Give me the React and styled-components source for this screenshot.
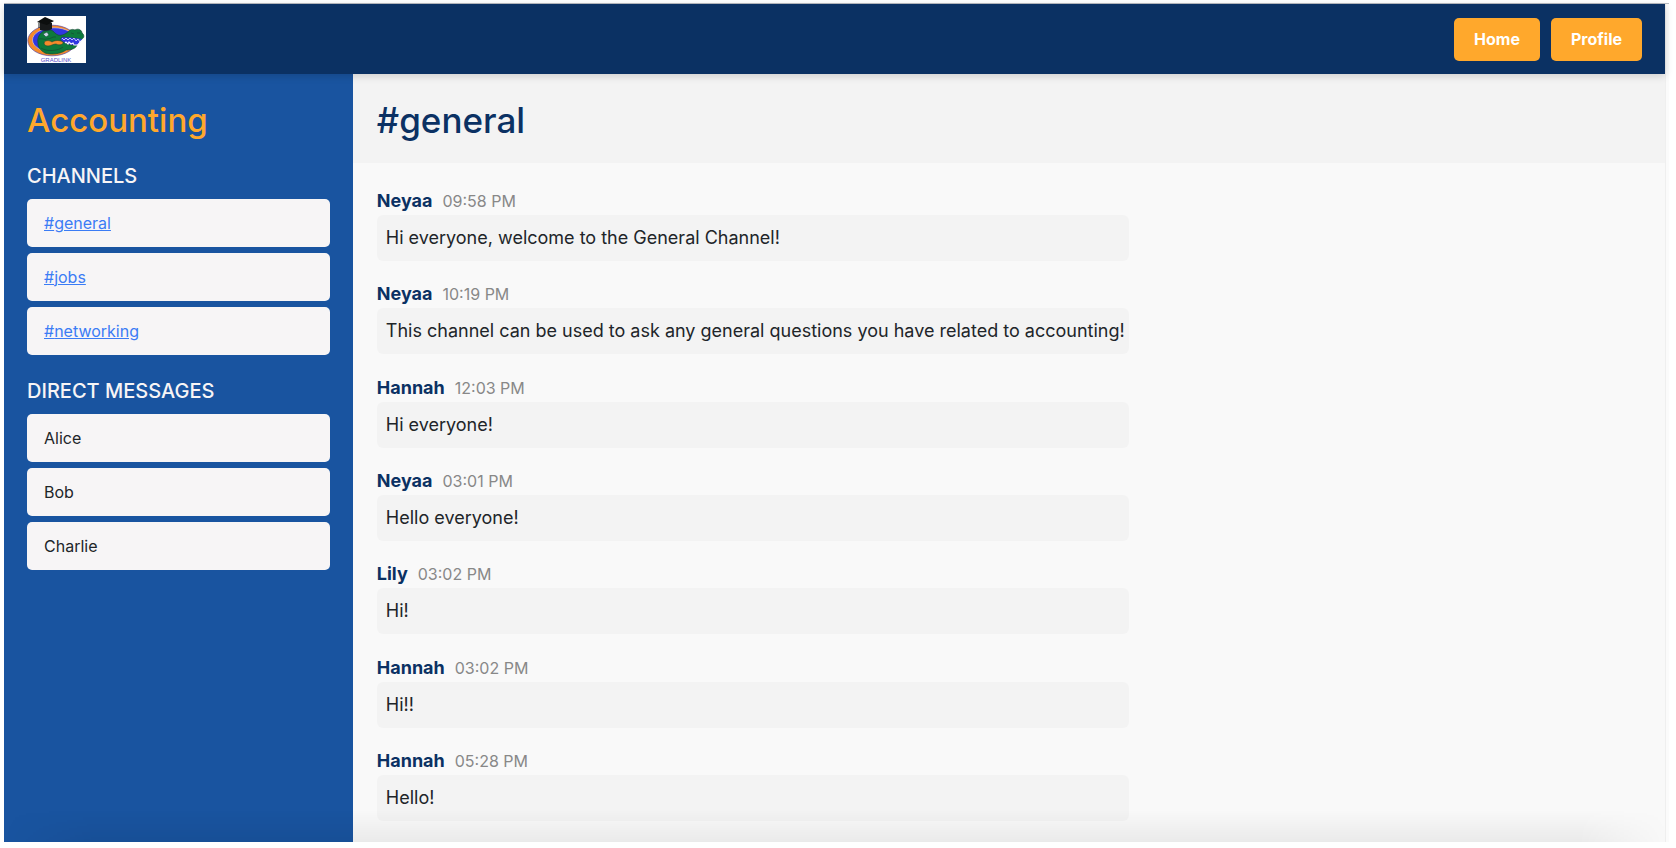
import React, { useState } from "react";
import styled, { createGlobalStyle } from "styled-components";

const GlobalStyle = createGlobalStyle`
  * {
    box-sizing: border-box;
  }
  body {
    margin: 0;
    background: #ffffff;
    color: #212529;
    font-family: Inter, "Liberation Sans", sans-serif;
  }
  h1, h2, h3, p, ul {
    margin: 0;
    padding: 0;
  }
`;

const Page = styled.div`
  display: flex;
  flex-direction: column;
  min-height: 100vh;
  padding: 3px 7px 6px 4px;
`;

const Frame = styled.div`
  flex: 1;
  display: flex;
  flex-direction: column;
  position: relative;
  border-top: 1px solid #b9bcc2;
  padding-right: 4px;
  background: linear-gradient(to left, #fbfbfb 3px, #efefef 3px, #efefef 4px, #f9f9f9 4px);

  &::after {
    content: "";
    position: absolute;
    inset: auto 0 0 0;
    height: 32px;
    pointer-events: none;
    background: linear-gradient(to bottom, transparent, rgba(0, 0, 0, 0.06));
    mask-image: linear-gradient(to right, transparent, #000 90px, #000 calc(100% - 90px), transparent);
  }
`;

const Header = styled.header`
  display: flex;
  align-items: center;
  justify-content: space-between;
  height: 70px;
  padding: 0 23px;
  background: #0b3163;
  box-shadow: 0 2px 8px rgba(0, 0, 0, 0.16);
  z-index: 1;
`;

const LogoImage = styled.svg`
  display: block;
  width: 59px;
  height: 47px;
`;

const Nav = styled.nav`
  display: flex;
  gap: 11px;
`;

const NavButton = styled.button`
  height: 43px;
  padding: 0 20px;
  border: 0;
  border-radius: 5px;
  background: #ffa82c;
  color: #ffffff;
  font: 700 16px Inter, "Liberation Sans", sans-serif;
  cursor: pointer;
`;

const Body = styled.div`
  flex: 1;
  display: flex;
`;

const Sidebar = styled.aside`
  width: 21%;
  padding: 25px 23px;
  background: #1954a0;
`;

const WorkspaceName = styled.h2`
  margin-bottom: 23px;
  color: #ffa82c;
  font-size: 33px;
  font-weight: 500;
  line-height: 42px;
`;

const SectionTitle = styled.h3`
  margin-bottom: 11px;
  color: #f7f5f6;
  font-size: 20px;
  font-weight: 500;
  line-height: 24px;
  text-transform: uppercase;
`;

const ItemList = styled.ul`
  display: flex;
  flex-direction: column;
  gap: 6px;
  margin-bottom: 24px;
  list-style: none;
`;

const Item = styled.li`
  height: 48px;
  padding: 0 17px;
  border-radius: 5px;
  background: #f7f5f6;
  font-size: 16px;
  line-height: 48px;
`;

const ChannelLink = styled.a`
  color: #3b7cf5;
  text-decoration: underline;
`;

const Chat = styled.main`
  flex: 1;
  display: flex;
  flex-direction: column;
  background: #f9f9f9;
`;

const ChatHeader = styled.div`
  height: 89px;
  padding: 24px;
  background: #f3f3f3;
`;

const ChannelName = styled.h1`
  color: #0b3163;
  font-size: 35px;
  font-weight: 500;
  line-height: 44px;
`;

const Messages = styled.div`
  flex: 1;
  display: flex;
  flex-direction: column;
  justify-content: space-between;
  align-self: flex-start;
  padding: 24px 24px 21px;
`;

const MessageInfo = styled.div`
  display: flex;
  align-items: baseline;
  gap: 10px;
  line-height: 27px;
`;

const Sender = styled.strong`
  color: #0b3163;
  font-size: 18px;
  font-weight: 700;
`;

const Time = styled.time`
  color: #888888;
  font-size: 16px;
`;

const Bubble = styled.p`
  padding: 10px 4px 10px 9px;
  border-radius: 6px;
  background: #f3f3f3;
  font-size: 18px;
  line-height: 26px;
`;

const channels = ["general", "jobs", "networking"];
const users = ["Alice", "Bob", "Charlie"];

const messages = [
  { sender: "Neyaa", time: "09:58 PM", text: "Hi everyone, welcome to the General Channel!" },
  { sender: "Neyaa", time: "10:19 PM", text: "This channel can be used to ask any general questions you have related to accounting!" },
  { sender: "Hannah", time: "12:03 PM", text: "Hi everyone!" },
  { sender: "Neyaa", time: "03:01 PM", text: "Hello everyone!" },
  { sender: "Lily", time: "03:02 PM", text: "Hi!" },
  { sender: "Hannah", time: "03:02 PM", text: "Hi!!" },
  { sender: "Hannah", time: "05:28 PM", text: "Hello!" },
];

const Logo = () => (
  <LogoImage viewBox="0 0 59 47" role="img" aria-label="GradLink">
    <rect width="59" height="47" fill="#ffffff" />
    <ellipse cx="25" cy="24.5" rx="24.2" ry="15.3" fill="#f58a2a" stroke="#5a49a8" strokeWidth="0.7" />
    <ellipse cx="27" cy="24" rx="21.5" ry="12.2" fill="#3036e0" stroke="#e8e4f5" strokeWidth="0.5" />
    {/* gator head */}
    <path
      d="M11 27 C10 21 13 17 17 15 L24 14 C27 15 28 18 31 19 C35 20 38 18 41 16 C43 13 46 13 48 14 C51 12 55 14 55 17 C58 19 57 23 54 24 C49 21 42 23 37 21 C34 21 33 23 35 25 C39 28 45 30 50 29 C49 33 43 34 39 34 C34 38 24 39 18 37 C13 34 11 31 11 27 Z"
      fill="#0d7a3c"
      stroke="#164a33"
      strokeWidth="0.7"
    />
    <path
      d="M17 27 C18 24 22 24 25 26 C28 24 33 24 36 26 C37 28 33 30 29 28 C26 28 24 30 21 30 C19 30 17 29 17 27 Z"
      fill="#f58a2a"
      stroke="#164a33"
      strokeWidth="0.6"
    />
    <path d="M34 22 C40 21 48 22 55 23 L50 29 C44 29 37 27 34 24 Z" fill="#3036e0" />
    <path
      d="M35 22 L37 24 L39 22 L41 24 L43 22 L45 24 L47 22 L49 25 L51 23 L53 26"
      fill="none"
      stroke="#ffffff"
      strokeWidth="0.7"
    />
    <path d="M38 27 L39 26 L41 28 L42 26 L44 28 L46 27 L47 29 L51 29 L57 22" fill="none" stroke="#f4f4ff" strokeWidth="1.1" />
    <path d="M16 18 L20 16 L22 19 L19 21 Z" fill="#c9d4e8" stroke="#164a33" strokeWidth="0.6" />
    <path d="M12 23 C15 22 17 24 20 23 C24 23 26 20 29 21 M14 32 C20 36 31 35 36 31 M44 17 L47 18 M50 17 L53 17" fill="none" stroke="#164a33" strokeWidth="0.7" />
    {/* graduation cap */}
    <path d="M13 7 L25 7 L25 13 C21 15 17 15 13 14 Z" fill="#17191a" />
    <path d="M10 6 L18 1 L27 5 L20 9 Z" fill="#0c0e0e" />
    <path d="M12 7 L12 12" stroke="#17191a" strokeWidth="1" />
    <text x="29" y="46" textAnchor="middle" fontFamily="Liberation Sans" fontSize="6" fill="#5a52cc">
      GRADLINK
    </text>
  </LogoImage>
);

const Message = ({ sender, time, text }) => (
  <article>
    <MessageInfo>
      <Sender>{sender}</Sender>
      <Time>{time}</Time>
    </MessageInfo>
    <Bubble>{text}</Bubble>
  </article>
);

const App = () => {
  const [channel, setChannel] = useState("general");

  const onChannelClick = (name) => (e) => {
    e.preventDefault();
    setChannel(name);
  };

  return (
    <Page>
      <GlobalStyle />
      <Frame>
        <Header>
          <Logo />
          <Nav>
            <NavButton type="button">Home</NavButton>
            <NavButton type="button">Profile</NavButton>
          </Nav>
        </Header>
        <Body>
          <Sidebar>
            <WorkspaceName>Accounting</WorkspaceName>
            <SectionTitle>Channels</SectionTitle>
            <ItemList>
              {channels.map((name) => (
                <Item key={name}>
                  <ChannelLink href={`#${name}`} onClick={onChannelClick(name)}>#{name}</ChannelLink>
                </Item>
              ))}
            </ItemList>
            <SectionTitle>Direct Messages</SectionTitle>
            <ItemList>
              {users.map((name) => (
                <Item key={name}>{name}</Item>
              ))}
            </ItemList>
          </Sidebar>
          <Chat>
            <ChatHeader>
              <ChannelName>#{channel}</ChannelName>
            </ChatHeader>
            <Messages>
              {messages.map((message, index) => (
                <Message key={index} {...message} />
              ))}
            </Messages>
          </Chat>
        </Body>
      </Frame>
    </Page>
  );
};

export default App;
